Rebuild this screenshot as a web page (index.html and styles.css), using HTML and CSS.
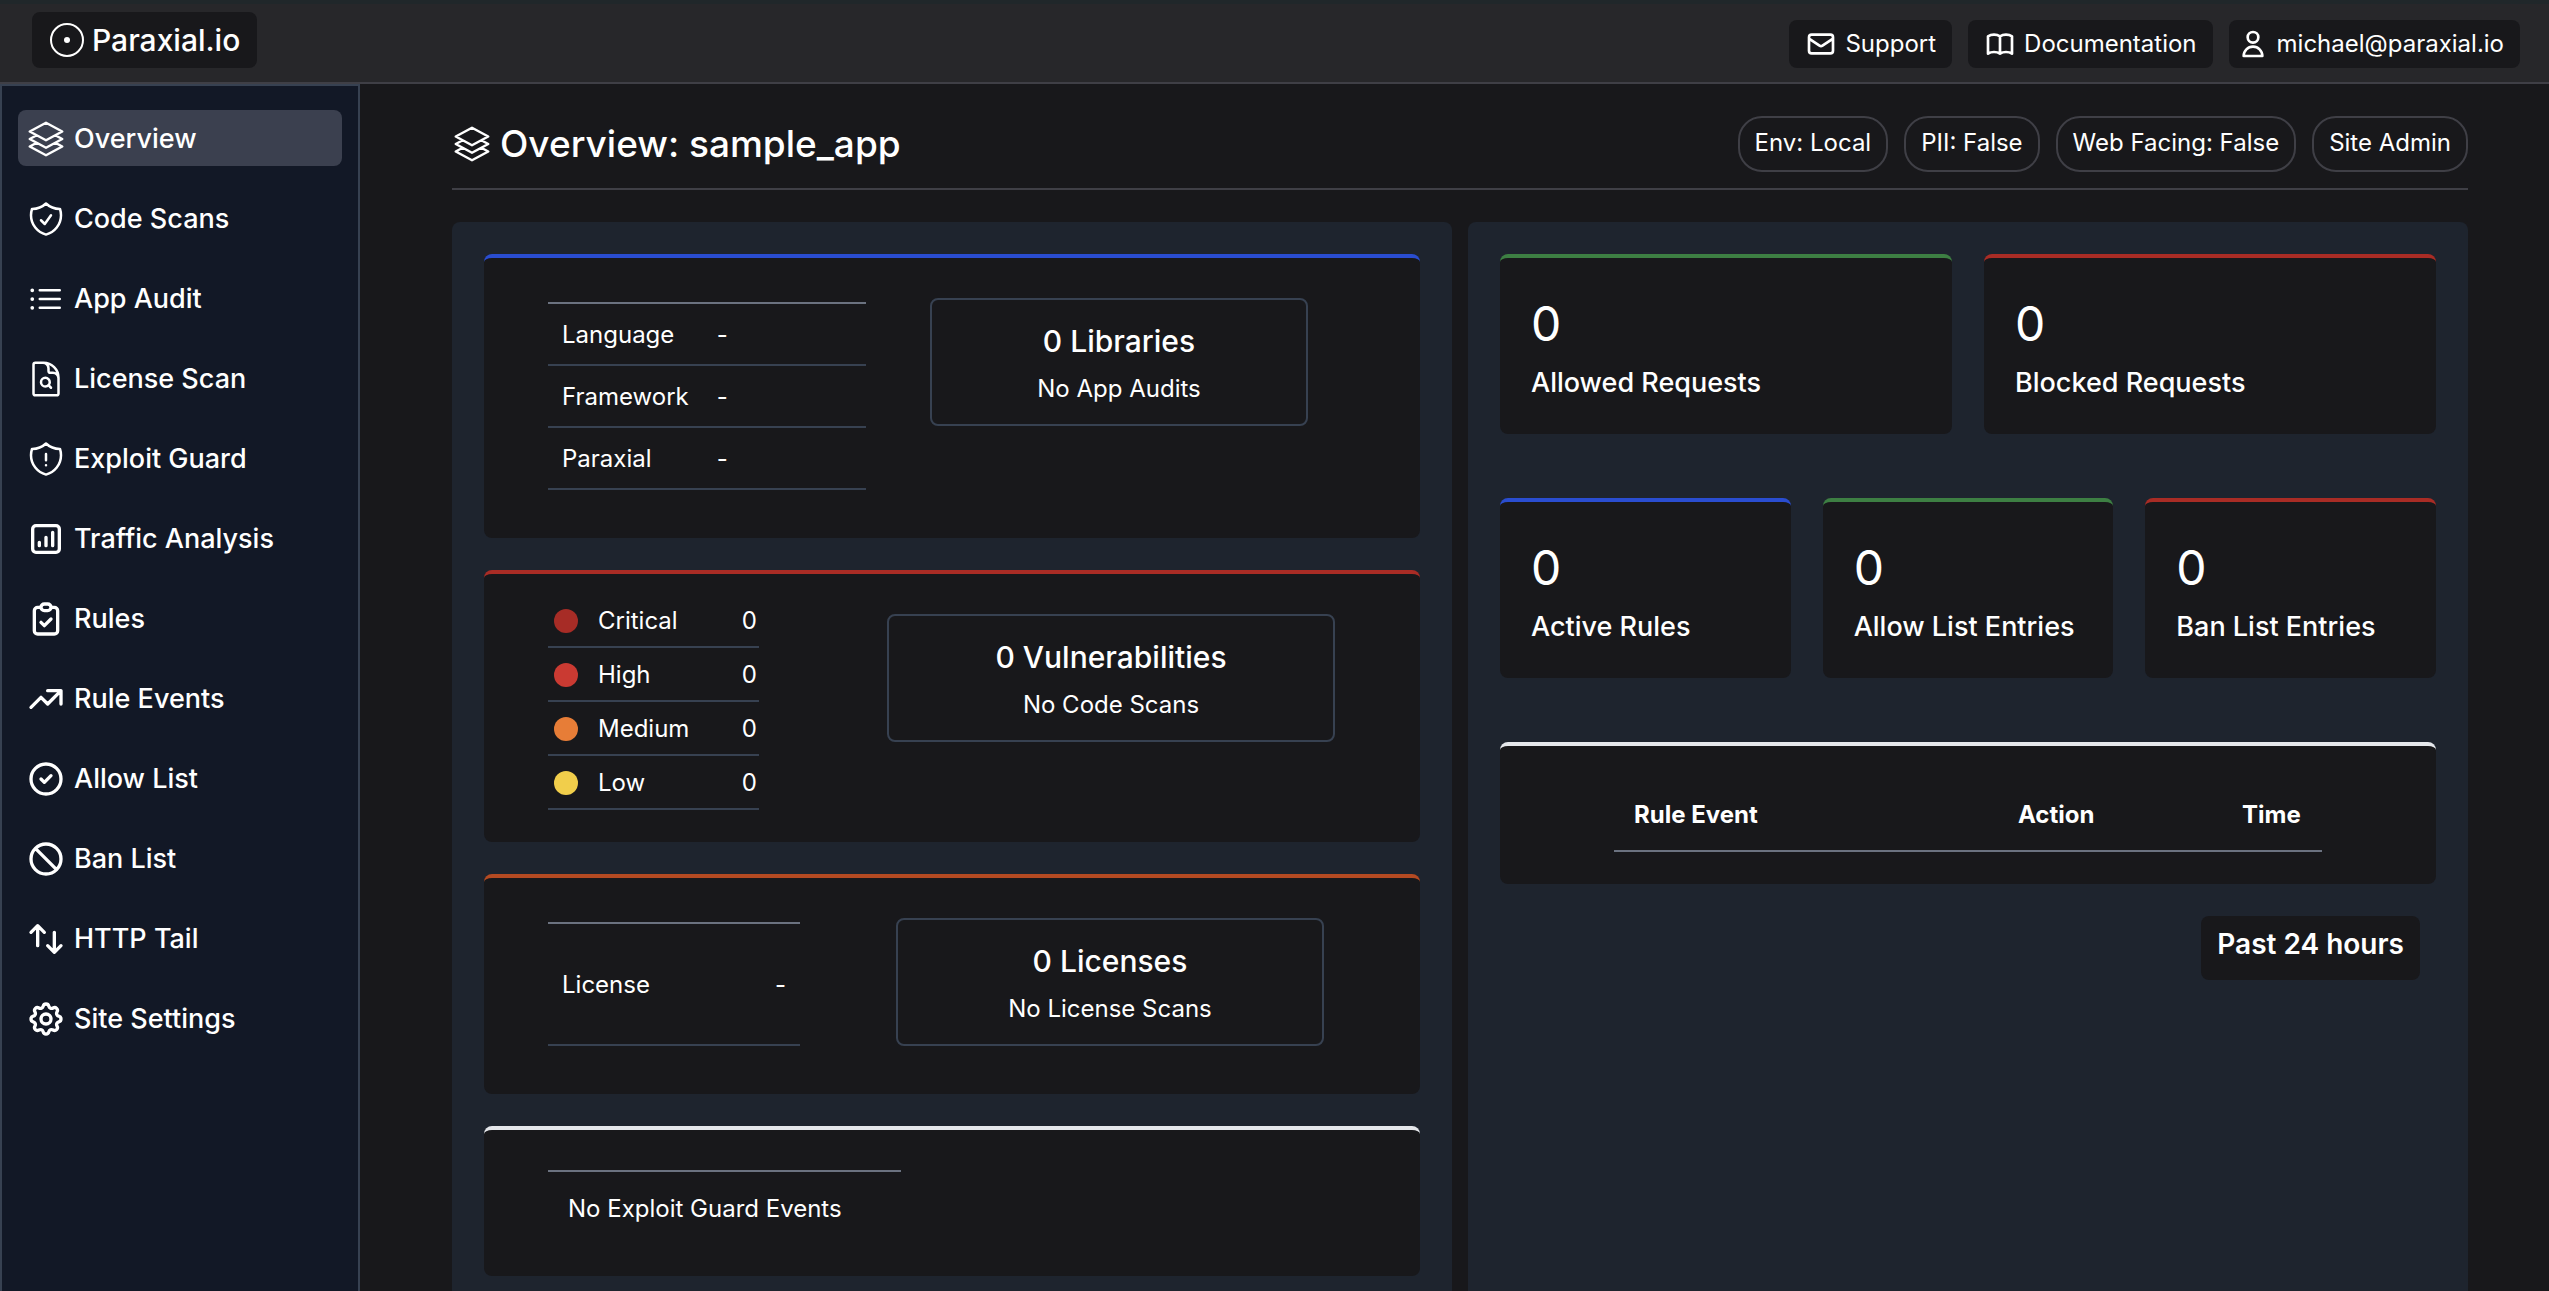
FILE: index.html
```html
<!DOCTYPE html>
<html lang="en">
<head>
<meta charset="utf-8">
<meta name="viewport" content="width=device-width, initial-scale=1">
<title>Overview: sample_app</title>
<link rel="stylesheet" href="styles.css">
</head>
<body>
<header class="topbar">
  <a class="brand" href="#">
    <svg class="brand-mark" viewBox="0 0 36 36" aria-hidden="true"><circle cx="18" cy="18" r="16" fill="none" stroke="currentColor" stroke-width="2"/><circle cx="18" cy="18" r="3" fill="currentColor"/></svg>
    Paraxial.io
  </a>
  <nav class="topbar-links" aria-label="Account">
    <a class="chip" href="#">
      <svg class="icon icon-small" viewBox="0 0 24 24" aria-hidden="true"><path d="M3 8l7.89 5.26a2 2 0 002.22 0L21 8M5 19h14a2 2 0 002-2V7a2 2 0 00-2-2H5a2 2 0 00-2 2v10a2 2 0 002 2z"/></svg>
      Support
    </a>
    <a class="chip" href="#">
      <svg class="icon icon-small" viewBox="0 0 24 24" aria-hidden="true"><path d="M12 6.253v13m0-13C10.832 5.477 9.246 5 7.5 5S4.168 5.477 3 6.253v13C4.168 18.477 5.754 18 7.5 18s3.332.477 4.5 1.253m0-13C13.168 5.477 14.754 5 16.5 5c1.747 0 3.332.477 4.5 1.253v13C19.832 18.477 18.247 18 16.5 18c-1.746 0-3.332.477-4.5 1.253"/></svg>
      Documentation
    </a>
    <button class="chip chip-user" type="button">
      <svg class="icon icon-small" viewBox="0 0 24 24" aria-hidden="true"><path d="M16 7a4 4 0 11-8 0 4 4 0 018 0zM12 14a7 7 0 00-7 7h14a7 7 0 00-7-7z"/></svg>
      michael@paraxial.io
    </button>
  </nav>
</header>
<div class="shell">
  <nav class="sidebar" aria-label="Main">
    <a class="nav-item nav-item-active" href="#" aria-current="page"><svg class="icon icon-thin" viewBox="0 0 24 24" aria-hidden="true"><path d="M6.429 9.75L2.25 12l4.179 2.25m0-4.5l5.571 3 5.571-3m-11.142 0L2.25 7.5 12 2.25l9.75 5.25-4.179 2.25m0 0L21.75 12l-4.179 2.25m0 0l4.179 2.25L12 21.75 2.25 16.5l4.179-2.25m11.142 0l-5.571 3-5.571-3"/></svg>Overview</a>
    <a class="nav-item" href="#"><svg class="icon icon-thin" viewBox="0 0 24 24" aria-hidden="true"><path d="M9 12.75L11.25 15 15 9.75m-3-7.036A11.959 11.959 0 013.598 6 11.99 11.99 0 003 9.749c0 5.592 3.824 10.29 9 11.623 5.176-1.332 9-6.03 9-11.622 0-1.31-.21-2.571-.598-3.751h-.152c-3.196 0-6.1-1.248-8.25-3.285z"/></svg>Code Scans</a>
    <a class="nav-item" href="#"><svg class="icon icon-thin" viewBox="0 0 24 24" aria-hidden="true"><path d="M8.25 6.75h12M8.25 12h12m-12 5.25h12M3.75 6.75h.007v.008H3.75V6.75zm.375 0a.375.375 0 11-.75 0 .375.375 0 01.75 0zM3.75 12h.007v.008H3.75V12zm.375 0a.375.375 0 11-.75 0 .375.375 0 01.75 0zm-.375 5.25h.007v.008H3.75v-.008zm.375 0a.375.375 0 11-.75 0 .375.375 0 01.75 0z"/></svg>App Audit</a>
    <a class="nav-item" href="#"><svg class="icon icon-thin" viewBox="0 0 24 24" aria-hidden="true"><path d="M19.5 14.25v-2.625a3.375 3.375 0 00-3.375-3.375h-1.5A1.125 1.125 0 0113.5 7.125v-1.5a3.375 3.375 0 00-3.375-3.375H8.25m5.231 13.481L15 17.25m-4.5-15H5.625c-.621 0-1.125.504-1.125 1.125v17.25c0 .621.504 1.125 1.125 1.125h12.75c.621 0 1.125-.504 1.125-1.125V11.25a9 9 0 00-9-9zm3.75 11.625a2.625 2.625 0 11-5.25 0 2.625 2.625 0 015.25 0z"/></svg>License Scan</a>
    <a class="nav-item" href="#"><svg class="icon icon-thin" viewBox="0 0 24 24" aria-hidden="true"><path d="M12 9v3.75m0-10.036A11.959 11.959 0 013.598 6 11.99 11.99 0 003 9.75c0 5.592 3.824 10.29 9 11.622 5.176-1.332 9-6.03 9-11.622 0-1.31-.21-2.57-.598-3.75h-.152c-3.196 0-6.1-1.249-8.25-3.286zm0 13.036h.008v.008H12v-.008z"/></svg>Exploit Guard</a>
    <a class="nav-item" href="#"><svg class="icon" viewBox="0 0 24 24" aria-hidden="true"><path d="M16 8v8m-4-5v5m-4-2v2m-2 4h12a2 2 0 002-2V6a2 2 0 00-2-2H6a2 2 0 00-2 2v12a2 2 0 002 2z"/></svg>Traffic Analysis</a>
    <a class="nav-item" href="#"><svg class="icon" viewBox="0 0 24 24" aria-hidden="true"><path d="M9 5H7a2 2 0 00-2 2v12a2 2 0 002 2h10a2 2 0 002-2V7a2 2 0 00-2-2h-2M9 5a2 2 0 002 2h2a2 2 0 002-2M9 5a2 2 0 012-2h2a2 2 0 012 2m-6 9l2 2 4-4"/></svg>Rules</a>
    <a class="nav-item" href="#"><svg class="icon" viewBox="0 0 24 24" aria-hidden="true"><path d="M13 7h8m0 0v8m0-8l-8 8-4-4-6 6"/></svg>Rule Events</a>
    <a class="nav-item" href="#"><svg class="icon" viewBox="0 0 24 24" aria-hidden="true"><path d="M9 12l2 2 4-4m6 2a9 9 0 11-18 0 9 9 0 0118 0z"/></svg>Allow List</a>
    <a class="nav-item" href="#"><svg class="icon" viewBox="0 0 24 24" aria-hidden="true"><path d="M18.364 18.364A9 9 0 005.636 5.636m12.728 12.728A9 9 0 015.636 5.636m12.728 12.728L5.636 5.636"/></svg>Ban List</a>
    <a class="nav-item" href="#"><svg class="icon" viewBox="0 0 24 24" aria-hidden="true"><path d="M7 16V4m0 0L3 8m4-4l4 4m6 0v12m0 0l4-4m-4 4l-4-4"/></svg>HTTP Tail</a>
    <a class="nav-item" href="#"><svg class="icon" viewBox="0 0 24 24" aria-hidden="true"><path d="M10.325 4.317c.426-1.756 2.924-1.756 3.35 0a1.724 1.724 0 002.573 1.066c1.543-.94 3.31.826 2.37 2.37a1.724 1.724 0 001.065 2.572c1.756.426 1.756 2.924 0 3.35a1.724 1.724 0 00-1.066 2.573c.94 1.543-.826 3.31-2.37 2.37a1.724 1.724 0 00-2.572 1.065c-.426 1.756-2.924 1.756-3.35 0a1.724 1.724 0 00-2.573-1.066c-1.543.94-3.31-.826-2.37-2.37a1.724 1.724 0 00-1.065-2.572c-1.756-.426-1.756-2.924 0-3.35a1.724 1.724 0 001.066-2.573c-.94-1.543.826-3.31 2.37-2.37.996.608 2.296.07 2.572-1.065z"/><path d="M15 12a3 3 0 11-6 0 3 3 0 016 0z"/></svg>Site Settings</a>
  </nav>
  <main class="content">
    <div class="page-head">
      <h1 class="page-title"><svg class="icon icon-thin" viewBox="0 0 24 24" aria-hidden="true"><path d="M6.429 9.75L2.25 12l4.179 2.25m0-4.5l5.571 3 5.571-3m-11.142 0L2.25 7.5 12 2.25l9.75 5.25-4.179 2.25m0 0L21.75 12l-4.179 2.25m0 0l4.179 2.25L12 21.75 2.25 16.5l4.179-2.25m11.142 0l-5.571 3-5.571-3"/></svg>Overview: sample_app</h1>
      <div class="pills">
        <span class="pill">Env: Local</span>
        <span class="pill">PII: False</span>
        <span class="pill">Web Facing: False</span>
        <span class="pill">Site Admin</span>
      </div>
    </div>
    <div class="panels">
      <section class="panel">
        <article class="card card-blue card-split card-app">
          <table class="facts facts-app">
            <tr><th scope="row">Language</th><td>-</td></tr>
            <tr><th scope="row">Framework</th><td>-</td></tr>
            <tr><th scope="row">Paraxial</th><td>-</td></tr>
          </table>
          <div class="summary"><h2>0 Libraries</h2><p>No App Audits</p></div>
        </article>
        <article class="card card-red card-split card-vulns">
          <table class="severity">
            <tr><td><span class="dot dot-critical"></span></td><th scope="row">Critical</th><td>0</td></tr>
            <tr><td><span class="dot dot-high"></span></td><th scope="row">High</th><td>0</td></tr>
            <tr><td><span class="dot dot-medium"></span></td><th scope="row">Medium</th><td>0</td></tr>
            <tr><td><span class="dot dot-low"></span></td><th scope="row">Low</th><td>0</td></tr>
          </table>
          <div class="summary"><h2>0 Vulnerabilities</h2><p>No Code Scans</p></div>
        </article>
        <article class="card card-orange card-split card-license">
          <table class="facts facts-license">
            <tr><th scope="row">License</th><td>-</td></tr>
          </table>
          <div class="summary"><h2>0 Licenses</h2><p>No License Scans</p></div>
        </article>
        <article class="card card-white card-guard">
          <p class="guard-note">No Exploit Guard Events</p>
        </article>
      </section>
      <section class="panel">
        <div class="stats stats-two">
          <article class="card card-green stat"><p class="stat-value">0</p><p class="stat-label">Allowed Requests</p></article>
          <article class="card card-red stat"><p class="stat-value">0</p><p class="stat-label">Blocked Requests</p></article>
        </div>
        <div class="stats stats-three">
          <article class="card card-blue stat"><p class="stat-value">0</p><p class="stat-label">Active Rules</p></article>
          <article class="card card-green stat"><p class="stat-value">0</p><p class="stat-label">Allow List Entries</p></article>
          <article class="card card-red stat"><p class="stat-value">0</p><p class="stat-label">Ban List Entries</p></article>
        </div>
        <article class="card card-white card-events">
          <table class="events">
            <thead><tr><th scope="col" class="col-event">Rule Event</th><th scope="col" class="col-action">Action</th><th scope="col" class="col-time">Time</th></tr></thead>
          </table>
        </article>
        <button class="range" type="button">Past 24 hours</button>
      </section>
    </div>
  </main>
</div>
</body>
</html>
```
FILE: styles.css
```css
* {
  box-sizing: border-box;
}

body {
  margin: 0;
  height: 100vh;
  display: flex;
  flex-direction: column;
  background: #18181b;
  color: #fff;
  font-family: Inter, "Liberation Sans", sans-serif;
  font-size: 24px;
  font-weight: 400;
  line-height: 32px;
}

h1, h2, p {
  margin: 0;
  font-weight: 400;
}

a {
  color: inherit;
  text-decoration: none;
}

button {
  border: 0;
  color: inherit;
  font: inherit;
}

table {
  border-spacing: 0;
}

th, td {
  padding: 0;
  font-weight: 400;
  text-align: left;
}

.icon {
  width: 40px;
  height: 40px;
  flex: none;
  fill: none;
  stroke: currentColor;
  stroke-width: 2;
  stroke-linecap: round;
  stroke-linejoin: round;
}

.icon-thin {
  stroke-width: 1.5;
}

.icon-small {
  width: 32px;
  height: 32px;
}

/* Top bar */

.topbar {
  display: flex;
  flex: none;
  justify-content: space-between;
  padding: 8px 29px 14px 32px;
  border-top: 4px solid #20272a;
  border-bottom: 2px solid #3f3f46;
  background: #27272a;
}

.brand {
  display: flex;
  align-items: center;
  gap: 7px;
  height: 56px;
  padding: 0 17px;
  border-radius: 8px;
  background: #18181b;
  font-size: 30px;
  font-weight: 500;
}

.brand-mark {
  width: 36px;
  height: 36px;
}

.topbar-links {
  display: flex;
  align-items: flex-end;
  gap: 16px;
}

.chip {
  display: flex;
  align-items: center;
  gap: 8px;
  height: 48px;
  padding: 0 16px;
  border-radius: 8px;
  background: #18181b;
}

.chip-user {
  padding-left: 8px;
}

/* Sidebar */

.shell {
  display: flex;
  flex: 1;
  min-height: 0;
}

.sidebar {
  display: flex;
  flex: none;
  flex-direction: column;
  gap: 24px;
  width: 360px;
  padding: 24px 16px;
  border: 2px solid #374151;
  border-bottom: 0;
  background: #121826;
}

.nav-item {
  display: flex;
  align-items: center;
  gap: 8px;
  height: 56px;
  padding: 1px 8px 0;
  border-radius: 8px;
  font-size: 27px;
  font-weight: 500;
}

.nav-item-active {
  background: #3b404f;
}

/* Page */

.content {
  flex: 1;
  min-width: 0;
  padding: 32px 81px 0 92px;
  overflow-y: auto;
  scrollbar-width: none;
}

.page-head {
  display: flex;
  justify-content: space-between;
  padding-bottom: 16px;
  border-bottom: 2px solid #3f3f46;
}

.page-title {
  display: flex;
  align-items: center;
  gap: 8px;
  font-size: 37px;
  font-weight: 500;
}

.pills {
  display: flex;
  gap: 16px;
}

.pill {
  height: 56px;
  padding: 9px 15px;
  border: 2px solid #3f3f46;
  border-radius: 24px;
}

.panels {
  display: grid;
  grid-template-columns: 1fr 1fr;
  gap: 16px;
  margin-top: 32px;
}

.panel {
  display: flex;
  flex-direction: column;
  gap: 32px;
  padding: 32px;
  border-radius: 8px;
  background: #1e242e;
}

.card {
  border-top: 4px solid;
  border-radius: 8px;
  background: #18181b;
}

.card-blue { border-color: #2a4dd0; }
.card-red { border-color: #a92c25; }
.card-orange { border-color: #b44a22; }
.card-green { border-color: #3d7f43; }
.card-white { border-color: #e5e7eb; }

.card-split {
  display: grid;
  align-items: start;
}

.card-app {
  grid-template-columns: 318fr 378fr;
  column-gap: 64px;
  padding: 44px 112px 48px 64px;
}

.card-vulns {
  grid-template-columns: 211fr 448fr;
  column-gap: 128px;
  padding: 20px 85px 32px 64px;
}

.card-license {
  grid-template-columns: 252fr 428fr;
  column-gap: 96px;
  padding: 44px 96px 48px 64px;
}

.summary {
  height: 128px;
  padding: 25px 16px;
  border: 2px solid #374151;
  border-radius: 8px;
  text-align: center;
}

.card-app .summary,
.card-license .summary {
  margin-top: -4px;
}

.card-vulns .summary {
  margin-top: 20px;
}

.summary h2 {
  margin-bottom: 16px;
  font-size: 30px;
  font-weight: 500;
}

/* Two-column fact tables and the severity list */

.facts th,
.facts td {
  height: 62px;
  padding: 2px 14px 0;
  border-bottom: 2px solid #374151;
}

.facts tr:first-child > * {
  height: 64px;
  border-top: 2px solid #6b7280;
}

.facts-app th {
  width: 154px;
}

.facts-license tr:first-child > * {
  height: 124px;
}

.facts-license td {
  text-align: right;
}

.severity th,
.severity td {
  height: 54px;
  padding-top: 2px;
  border-bottom: 2px solid #374151;
}

.severity td:first-child {
  width: 50px;
  padding-left: 6px;
}

.severity td:last-child {
  padding-right: 2px;
  text-align: right;
}

.dot {
  display: block;
  width: 24px;
  height: 24px;
  border-radius: 50%;
}

.dot-critical { background: #a72c26; }
.dot-high { background: #ca3a32; }
.dot-medium { background: #e77d37; }
.dot-low { background: #f1ce4b; }

.card-guard {
  padding: 40px 64px 44px;
}

.guard-note {
  width: 353px;
  padding: 21px 20px 7px;
  border-top: 2px solid #6b7280;
  white-space: nowrap;
}

.stats {
  display: grid;
  gap: 32px;
}

.stats-two {
  grid-template-columns: repeat(2, minmax(0, 1fr));
}

.stats-three {
  grid-template-columns: repeat(3, minmax(0, 1fr));
  margin: 32px 0;
}

.stat {
  height: 180px;
  padding: 42px 31px;
}

.stat-value {
  font-size: 48px;
  line-height: 48px;
}

.stat-label {
  margin-top: 19px;
  font-size: 27px;
  font-weight: 500;
  white-space: nowrap;
}

.card-events {
  padding: 32px 114px;
}

.events {
  width: 100%;
}

.events th {
  height: 74px;
  padding: 2px 20px 0;
  border-bottom: 2px solid #6b7280;
  font-weight: 700;
}

.events .col-action {
  width: 224px;
}

.events .col-time {
  width: 100px;
}

.range {
  align-self: flex-end;
  height: 64px;
  margin-right: 16px;
  padding: 12px 16px 20px;
  border-radius: 8px;
  background: #18181b;
  font-size: 28px;
  font-weight: 600;
}
```
